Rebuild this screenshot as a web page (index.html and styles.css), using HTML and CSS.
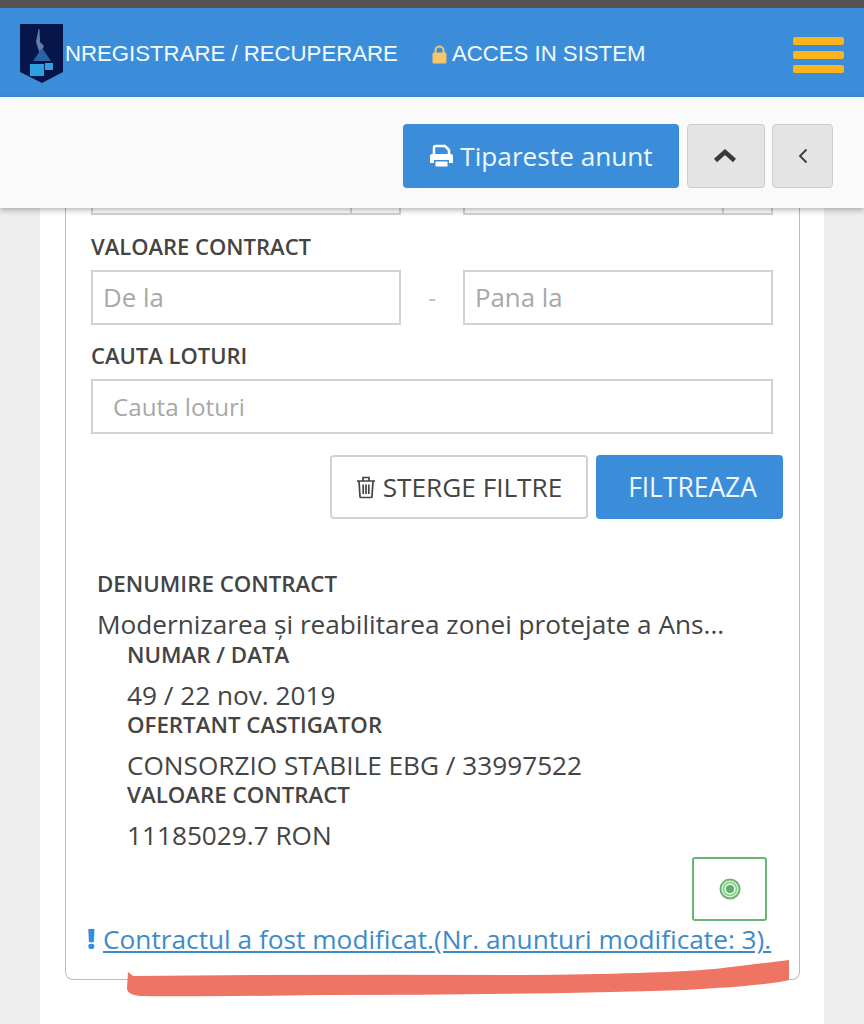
FILE: index.html
```html
<!DOCTYPE html>
<html lang="ro">
<head>
<meta charset="utf-8">
<title>Anunt</title>
<link rel="stylesheet" href="styles.css">
</head>
<body>
<div class="statusbar"></div>
<header class="nav">
  <svg class="logo" width="44" height="60" viewBox="0 0 44 60">
    <path d="M0 0H43V48L22 59L0 48Z" fill="#07164a"/>
    <path d="M18.500 5L19.500 5L20 18L24 22L20 30L16 18Z" fill="#5f7fa8"/>
    <path d="M22 24L31 37H13Z" fill="#2a62a8"/>
    <rect x="10" y="40" width="14" height="12" fill="#2f9fe0"/>
    <rect x="25" y="39" width="8" height="7" fill="#2f9fe0"/>
  </svg>
  <a class="navlink navlink-first">NREGISTRARE / RECUPERARE</a>
  <a class="navlink navlink-lock">
    <svg width="15" height="19" viewBox="0 0 15 19"><path d="M3.500 8V5.500a4 4 0 0 1 8 0V8" fill="none" stroke="#f5c66a" stroke-width="2"/><rect x="0.500" y="7.500" width="14" height="11" rx="1.500" fill="#f5c66a"/></svg>
    ACCES IN SISTEM
  </a>
  <div class="burger"><span></span><span></span><span></span></div>
</header>
<div class="toolbar">
  <button class="btn-print">
    <svg width="25" height="25" viewBox="0 0 25 25"><path d="M5 11V3.500A1.500 1.500 0 0 1 6.500 2H16l4 4v5" fill="none" stroke="#fff" stroke-width="2.500"/><path d="M3 10H22a2 2 0 0 1 2 2v7h-4v-3H5v3H1v-7a2 2 0 0 1 2-2Z" fill="#fff"/><rect x="6.500" y="17.500" width="12" height="5" fill="#fff"/></svg>
    Tipareste anunt
  </button>
  <button class="btn-grey btn-up">
    <svg width="24" height="14" viewBox="0 0 24 14"><path d="M2.500 11.500L12 3l9.500 8.500" fill="none" stroke="#3a3a3a" stroke-width="4.500"/></svg>
  </button>
  <button class="btn-grey btn-back">
    <svg width="10" height="16" viewBox="0 0 10 16"><path d="M8.500 1.500L2 8l6.500 6.500" fill="none" stroke="#3a3a3a" stroke-width="1.800"/></svg>
  </button>
</div>
<main class="page">
  <div class="column">
    <section class="card">
      <div class="stub-row">
        <div class="stub"><span></span></div>
        <div class="stub"><span></span></div>
      </div>
      <label class="label label-value">VALOARE CONTRACT</label>
      <div class="range">
        <div class="input">De la</div>
        <div class="dash">-</div>
        <div class="input">Pana la</div>
      </div>
      <label class="label label-search">CAUTA LOTURI</label>
      <div class="input input-search">Cauta loturi</div>
      <div class="actions">
        <button class="btn-clear">
          <svg width="20" height="24" viewBox="0 0 20 24"><path d="M1 6H19M7 6V2.500h6V6M3 6l1 15.500a1 1 0 0 0 1 1h10a1 1 0 0 0 1-1L17 6M7.200 9.500v9.500M10 9.500v9.500M12.800 9.500v9.500" fill="none" stroke="#444" stroke-width="1.700"/></svg>
          STERGE FILTRE
        </button>
        <button class="btn-filter">FILTREAZA</button>
      </div>
      <div class="result">
        <div class="field-label">DENUMIRE CONTRACT</div>
        <div class="field-value">Modernizarea și reabilitarea zonei protejate a Ans...</div>
        <div class="nested">
          <div class="field-label">NUMAR / DATA</div>
          <div class="field-value">49 / 22 nov. 2019</div>
          <div class="field-label">OFERTANT CASTIGATOR</div>
          <div class="field-value">CONSORZIO STABILE EBG / 33997522</div>
          <div class="field-label">VALOARE CONTRACT</div>
          <div class="field-value">11185029.7 RON</div>
        </div>
      </div>
      <div class="status-row">
        <button class="btn-status">
          <svg width="24" height="24" viewBox="0 0 24 24"><circle cx="12" cy="12" r="9.500" fill="#d8f3d8" stroke="#6fb077" stroke-width="2"/><circle cx="12" cy="12" r="6.500" fill="#e6f7e6" stroke="#7fd083" stroke-width="1.500"/><circle cx="12" cy="12" r="4" fill="#5fae68"/></svg>
        </button>
      </div>
      <div class="notice"><span class="bang">!</span><a class="notice-link">Contractul a fost modificat.(Nr. anunturi modificate: 3).</a></div>
    </section>
  </div>
  <svg class="marker" width="670" height="38" viewBox="0 0 670 38"><path d="M3 12L8 16Q200 14 400 15Q530 14 590 9Q640 3 664 0L664 20Q640 26 560 30Q400 35 200 35Q60 37 20 36Q2 36 2 28Z" fill="#ee7463"/></svg>
</main>
</body>
</html>
```
FILE: styles.css
```css
* { box-sizing: border-box; }
html, body { margin: 0; height: 1024px; overflow: hidden; }
body { font-family: "Open Sans", sans-serif; color: #444; background: #eee; }
button { font-family: inherit; cursor: pointer; }

.statusbar { height: 8px; background: #555052; }
.nav { height: 89px; background: #3c8dd9; display: flex; align-items: center; position: relative; font-family: "Liberation Sans", sans-serif; padding-top: 1px; }
.logo { margin-left: 20px; flex: none; margin-top: 1px; }
.navlink { color: #f2fbff; font-size: 22.200px; display: flex; align-items: center; gap: 5px; margin-top: 2px; }
.navlink-first { margin-left: 1px; }
.navlink-lock { margin-left: 34px; }
.burger { margin-left: auto; margin-right: 20px; margin-top: 4px; display: flex; flex-direction: column; gap: 6px; }
.burger span { display: block; width: 51px; height: 8px; border-radius: 2px; background: #fbb41c; }

.toolbar { height: 111px; border-top: 2px solid #f0fbff; background: #fafafa; box-shadow: 0 2px 6px rgba(0,0,0,.3); display: flex; justify-content: flex-end; align-items: center; gap: 7px; padding: 5px 31px 0 0; position: relative; z-index: 2; }
.btn-print { width: 276px; height: 64px; margin-right: 1px; border: 0; border-radius: 4px; background: #3c8dd9; color: #eef8ff; font-size: 26.200px; display: flex; align-items: center; justify-content: center; gap: 6px; padding: 0; }
.btn-grey { height: 64px; border: 1px solid #ccc; border-radius: 4px; background: #e4e4e4; display: flex; align-items: center; justify-content: center; padding: 0; }
.btn-up { width: 78px; padding-right: 2px; }
.btn-back { width: 61px; }

.page { position: relative; height: 816px; }
.column { width: 784px; height: 816px; margin-left: 40px; background: #fff; padding-left: 25px; }
.card { width: 735px; height: 772px; border: 1px solid #bbb; border-top: 0; border-radius: 0 0 8px 8px; padding: 0 16px 0 25px; }

.stub-row { display: grid; grid-template-columns: 310px 310px; column-gap: 62px; height: 7px; }
.stub { border: 2px solid #d2d2d2; border-top: 0; position: relative; display: flex; justify-content: flex-end; }
.stub span { width: 49px; border-left: 2px solid #d2d2d2; }

.label { display: block; font-weight: 600; font-size: 22px; line-height: 28px; color: #444; }
.label-value { margin-top: 17px; }
.label-search { margin-top: 15px; }
.range { display: grid; grid-template-columns: 310px 62px 310px; margin-top: 10px; }
.input { height: 55px; border: 2px solid #d2d2d2; background: #fff; color: #a8a8a8; font-size: 25.800px; line-height: 51px; padding-left: 10px; }
.dash { text-align: center; color: #bbb; font-size: 24px; line-height: 56px; }
.input-search { width: 682px; margin-top: 10px; padding-left: 20px; font-size: 24.200px; }

.actions { display: flex; justify-content: flex-end; gap: 8px; margin-top: 21px; }
.btn-clear { width: 258px; height: 64px; border: 2px solid #d2d2d2; border-radius: 4px; background: #fff; color: #444; font-size: 26.200px; display: flex; align-items: center; justify-content: center; gap: 7px; padding: 0; }
.btn-filter { width: 187px; height: 64px; border: 0; border-radius: 4px; background: #3c8dd9; color: #eef8ff; font-size: 26.400px; padding: 0 0 0 6px; }

.result { margin-top: 50px; padding-left: 6px; }
.field-label { font-weight: 600; font-size: 22.300px; line-height: 30px; }
.field-value { font-size: 26.200px; line-height: 30px; padding-top: 10px; margin-bottom: 1px; white-space: nowrap; }
.nested { padding-left: 30px; }
.nested .field-value { margin-bottom: 0; }

.status-row { display: flex; justify-content: flex-end; padding-right: 16px; margin-top: 7px; }
.btn-status { width: 75px; height: 64px; border: 2px solid #6bb573; border-radius: 3px; background: #fff; display: flex; align-items: center; justify-content: center; padding: 0; }

.notice { display: flex; align-items: baseline; margin: 0 0 0 -4px; font-size: 26.250px; line-height: 34px; white-space: nowrap; }
.bang { color: #2a8fe8; font-weight: 800; width: 16px; font-size: 29px; }
.notice-link { color: #3d8bc9; text-decoration: underline; }

.marker { position: absolute; left: 125px; top: 752px; }
```
